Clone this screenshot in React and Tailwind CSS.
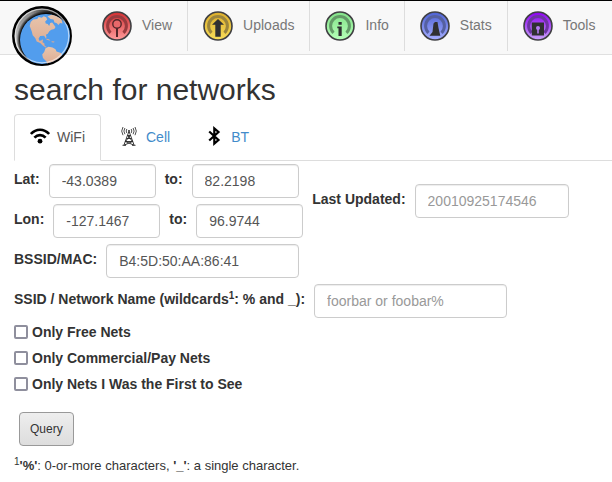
import React from "react";

function Globe() {
  return (
    <svg width="60" height="60" viewBox="0 0 60 60" aria-hidden="true">
      <defs>
        <linearGradient id="shade" x1="0" y1="0.6" x2="0.9" y2="0">
          <stop offset="0" stopColor="#ccc" />
          <stop offset="0.3" stopColor="#999" />
          <stop offset="0.5" stopColor="#888" />
          <stop offset="0.8" stopColor="#222" />
        </linearGradient>
        <radialGradient id="gap" cx="0.5" cy="0.5" r="0.5">
          <stop offset="0.88" stopColor="#000" />
          <stop offset="1" stopColor="#000" stopOpacity="0" />
        </radialGradient>
        <linearGradient id="land" x1="0" y1="0" x2="0" y2="1">
          <stop offset="0" stopColor="#e8c4ab" />
          <stop offset="1" stopColor="#dca990" />
        </linearGradient>
        <clipPath id="disc">
          <circle cx="30" cy="30" r="28" />
        </clipPath>
        <clipPath id="sphere">
          <circle cx="34" cy="34" r="26" />
        </clipPath>
      </defs>
      <circle cx="30" cy="30" r="28.7" fill="url(#shade)" stroke="#000" strokeWidth="2.500" />
      <g clipPath="url(#disc)">
        <circle cx="34" cy="34" r="29.5" fill="url(#gap)" />
        <circle cx="34" cy="34" r="26" fill="#529ded" />
        <g clipPath="url(#sphere)" fill="url(#land)">
          <path d="M17.700 20l1-4 2.500-2.500 4-.5 1.500-2 3 .8 2-1.500 2.500 1 1 2.200-2 2 .5 2 2 .5 1.500 2 1-3 2-.5 1.500 2 1.800 2.500-1.200 2-3 .8-2 1.500-1.500 2.500-2 1 .8 2.500-1.200.6-1.200-2.200-4 .3-1.600 2.500.6 2.300 2.200-.2.600-1.200 1 .3-.5 2.500 1.800 1 .4 2.500 2 1.200-1 .6-3-2-2.500-2.500-3.500-1.500-1.500-3.500-2.500-2.800-1-4z" />
          <path d="M35.500 10.500l5.500-2.500 5.500 2 3 3.500 1 4-2.500-.5-1.500 2-2-2-2-.5-1-3-3-.5zM33 32.500l4 .8 1.500 1.400-3-.6zM39.500 35.300l3 .2-.5 1-2.300-.2z" />
          <path d="M33.500 42.200l3-1.400 4 .8 3 1.600 1 2.300 4.500 1.400 1 2-2.500 3.500-2.500 4-4 4-5 0-1.500-5-3.500-3.500-.8-3.500 2-2.500z" />
        </g>
        <circle cx="30" cy="30" r="26.800" fill="none" stroke="#fff" strokeOpacity="0.600" strokeWidth="1.200" />
      </g>
    </svg>
  );
}

function Badge({ id, from, to, ring, children }) {
  return (
    <svg width="30" height="30" viewBox="0 0 30 30" className="shrink-0" aria-hidden="true">
      <defs>
        <linearGradient id={id} x1="0" y1="0" x2="0" y2="1">
          <stop offset="0" stopColor={from} />
          <stop offset="1" stopColor={to} />
        </linearGradient>
      </defs>
      <circle cx="15" cy="15" r="14" fill={`url(#${id})`} stroke="#3f3f42" strokeWidth="1.600" />
      <path d="M8.500 21.800A9.400 9.400 0 1 1 21.500 21.800" fill="none" stroke={ring} strokeWidth="3" />
      {children}
    </svg>
  );
}

const ink = "#303032";

const nav = [
  {
    label: "View",
    icon: (
      <Badge id="view" from="#d22f32" to="#ff9c9c" ring="#993b3f">
        <circle cx="15" cy="13" r="4.200" fill="#e8686a" stroke="#54272a" strokeWidth="1.400" />
        <path d="M15 17v9" stroke="#54272a" strokeWidth="2" />
      </Badge>
    ),
  },
  {
    label: "Uploads",
    icon: (
      <Badge id="uploads" from="#dcae2c" to="#f7dc59" ring="#9b853d">
        <path d="M15 8l6 5.800H17.700V25.700H12.300V13.800H9z" fill={ink} />
      </Badge>
    ),
  },
  {
    label: "Info",
    icon: (
      <Badge id="info" from="#82e288" to="#b5ffb8" ring="#649a68">
        <path d="M13.500 11h3.200v2.800h-3.200zM12.300 15.500h4.400V25h-3.200v-7.800h-1.200z" fill={ink} />
      </Badge>
    ),
  },
  {
    label: "Stats",
    icon: (
      <Badge id="stats" from="#4d62d4" to="#a6aeff" ring="#5560a0">
        <path d="M9.500 24.800l3-3.800 1-8.500 1.500-1.500h2.500l1 6 1.800 7.800z" fill={ink} />
      </Badge>
    ),
  },
  {
    label: "Tools",
    icon: (
      <Badge id="tools" from="#8d00f2" to="#c9a4fa" ring="#6d35a2">
        <path d="M8.800 11.500h12.200v13H8.800z" fill={ink} />
        <circle cx="15" cy="17" r="2" fill="#b57cf5" />
        <path d="M14.200 18h1.600v4.500h-1.600z" fill="#b57cf5" />
      </Badge>
    ),
  },
];

function WifiIcon() {
  return (
    <svg width="20" height="20" viewBox="0 0 20 20" fill="none" stroke="#000" strokeWidth="2.600" aria-hidden="true">
      <path d="M.9 8C6 2.300 14 2.300 19.100 8M4.400 11.700C7.600 8.200 12.400 8.200 15.600 11.700" />
      <circle cx="10" cy="15.200" r="2.400" fill="#000" stroke="none" />
    </svg>
  );
}

function TowerIcon() {
  return (
    <svg width="20" height="20" viewBox="0 0 20 20" fill="none" stroke="#222" strokeWidth="1" aria-hidden="true">
      <path d="M9.700 6L5 19M10.300 6L15 19M8.700 9.500h2.600M7.600 12.500h4.800M6.400 15.500h7.200M8.700 9.500l4.900 6M11.300 9.500l-4.900 6M6.400 15.500l8.200 3.500M13.600 15.500L5.400 19M3.500 19.300h3.500M13 19.300h3.500" strokeWidth="0.900" />
      <circle cx="10" cy="5" r="1" fill="#222" stroke="none" />
      <path d="M7.800 3q-1.200 2 0 4M5.900 2q-2 3.100 0 6.200M4 1q-2.600 4.100 0 8.200M12.200 3q1.200 2 0 4M14.100 2q2 3.100 0 6.200M16 1q2.600 4.100 0 8.200" strokeWidth="0.800" />
    </svg>
  );
}

function BluetoothIcon() {
  return (
    <svg width="20" height="20" viewBox="0 0 20 20" fill="none" stroke="#000" strokeWidth="2.200" aria-hidden="true">
      <path d="M5.200 5.500l9.300 8.500-4.200 3.600V2.400l4.200 3.600-9.300 8.500" />
    </svg>
  );
}

const inputStyle =
  "h-[34px] rounded border border-[#ccc] bg-white px-3 text-sm text-[#555] shadow-[inset_0_1px_1px_rgba(0,0,0,0.075)] placeholder:text-[#999] placeholder:opacity-100";

function Field({ id, label, width, ...rest }) {
  return (
    <div className="flex items-center gap-[9px]">
      <label htmlFor={id} className="pb-1 text-sm font-bold whitespace-nowrap">
        {label}
      </label>
      <input id={id} type="text" className={`${inputStyle} ${width}`} {...rest} />
    </div>
  );
}

const filters = ["Only Free Nets", "Only Commercial/Pay Nets", "Only Nets I Was the First to See"];

export default function App() {
  return (
    <div className="bg-white font-['Liberation_Sans',Arial,sans-serif] text-sm text-[#333]">
      <header className="flex h-[55px] gap-[15px] border-t border-b border-t-black border-b-[#e0e0e0] bg-[#f8f8f8] pl-3">
        <a href="#home" aria-label="Home" className="mt-[5px] h-[60px] w-[60px] shrink-0">
          <Globe />
        </a>
        <nav className="flex h-[50px]">
          {nav.map(({ label, icon }) => (
            <a
              key={label}
              href={`#${label.toLowerCase()}`}
              className="flex items-center gap-2.5 border-r border-[#ddd] px-[15px] text-[#777] last:border-r-0"
            >
              {icon}
              <span className="pb-0.5">{label}</span>
            </a>
          ))}
        </nav>
      </header>

      <main className="pt-[18px]">
        <h2 className="px-3.5 text-[30px] leading-[33px]">search for networks</h2>

        <div className="mt-2 ml-3.5 flex h-[47px] gap-0.5 border-b border-[#ddd]">
          <a
            href="#wifi"
            className="-mb-px flex items-center gap-[7px] rounded-t border border-[#ddd] border-b-white bg-white px-[15px] pb-1 text-[#555]"
          >
            <WifiIcon />
            <span className="pt-0.5">WiFi</span>
          </a>
          <a href="#cell" className="flex items-center gap-[7px] px-4 pb-[3px] text-[#428bca]">
            <TowerIcon />
            <span className="pt-0.5">Cell</span>
          </a>
          <a href="#bt" className="flex items-center gap-[7px] px-4 pb-[3px] text-[#428bca]">
            <BluetoothIcon />
            <span className="pt-0.5">BT</span>
          </a>
        </div>

        <form className="px-3.5 pt-[3px]" onSubmit={(e) => e.preventDefault()}>
          <div className="flex items-center gap-[9px]">
            <div className="flex flex-col gap-1.5">
              <div className="flex gap-[9px]">
                <Field id="lat-from" label="Lat:" width="w-[107px]" defaultValue="-43.0389" />
                <Field id="lat-to" label="to:" width="w-[107px]" defaultValue="82.2198" />
              </div>
              <div className="flex gap-[9px]">
                <Field id="lon-from" label="Lon:" width="w-[107px]" defaultValue="-127.1467" />
                <Field id="lon-to" label="to:" width="w-[107px]" defaultValue="96.9744" />
              </div>
            </div>
            <Field id="updated" label="Last Updated:" width="w-[154px]" placeholder="20010925174546" />
          </div>
          <div className="mt-1.5 flex flex-col items-start gap-1.5">
            <Field id="bssid" label="BSSID/MAC:" width="w-[193px]" defaultValue="B4:5D:50:AA:86:41" />
            <Field
              id="ssid"
              label={
                <>
                  SSID / Network Name (wildcards<sup className="text-[10px]">1</sup>: % and _):
                </>
              }
              width="w-[193px]"
              placeholder="foorbar or foobar%"
            />
          </div>

          <div className="mt-1 flex flex-col items-start gap-1.5">
            {filters.map((text) => (
              <label key={text} className="flex items-center gap-1 font-bold">
                <input
                  type="checkbox"
                  className="h-3.5 w-3.5 appearance-none rounded-xs border-2 border-[#8f8f9d] bg-white checked:bg-[#337ab7]"
                />
                {text}
              </label>
            ))}
          </div>

          <button
            type="submit"
            className="mt-[18px] ml-[5px] block h-[34px] rounded border border-[#999] bg-linear-to-b from-[#eee] to-[#ddd] px-2.5 text-xs"
          >
            Query
          </button>
        </form>

        <p className="px-3.5 pt-2.5 text-[13px] leading-5">
          <sup className="text-[10px]">1</sup>
          <b>'%'</b>: 0-or-more characters, <b>'_'</b>: a single character.
        </p>
      </main>
    </div>
  );
}
